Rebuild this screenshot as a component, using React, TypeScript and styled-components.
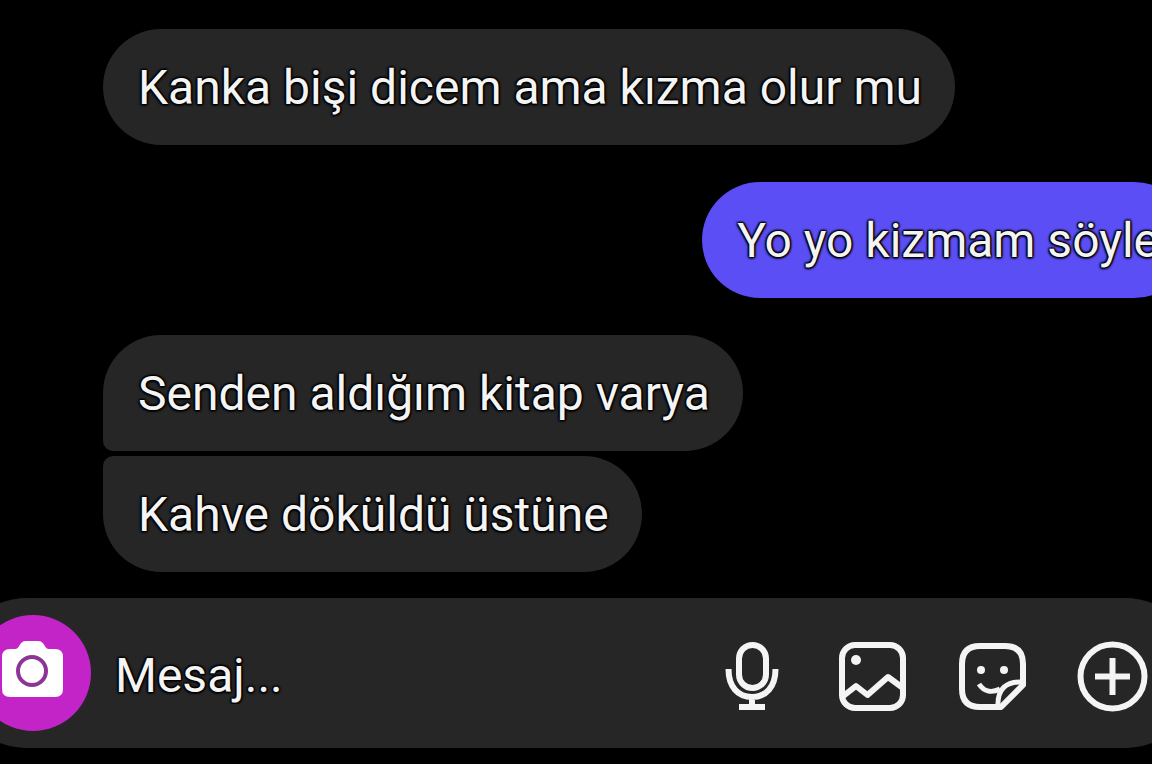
import React from "react";
import styled, { createGlobalStyle } from "styled-components";

const GlobalStyle = createGlobalStyle`
  *, *::before, *::after { box-sizing: border-box; }
  html, body { margin: 0; background: #000; }
`;

const outline =
  "1px 1px 2px #000, -1px 1px 2px #000, 1px -1px 2px #000, -1px -1px 2px #000, 0 1px 3px #000";

const Screen = styled.div`
  display: flex;
  flex-direction: column;
  min-height: 100vh;
  padding: 29px 0 16px;
  overflow: hidden;
  background: #000;
  color: #f4f4f4;
  font-family: Roboto, "Liberation Sans", sans-serif;
  font-size: 48px;
  line-height: 56px;
`;

const Thread = styled.main`
  display: flex;
  flex: 1;
  flex-direction: column;
  gap: 37px;
  margin-bottom: 26px;
`;

const Group = styled.section<{ $own?: boolean }>`
  display: flex;
  flex-direction: column;
  gap: 5px;
  align-items: ${(p) => (p.$own ? "flex-end" : "flex-start")};
  margin-left: 103px;
  margin-right: ${(p) => (p.$own ? "-40px" : "0")};
`;

const Bubble = styled.p<{ $own?: boolean }>`
  margin: 0;
  padding: 31px 33px 29px 35px;
  border-radius: 58px;
  background: ${(p) => (p.$own ? "#5b4ef5" : "#262626")};
  text-shadow: ${outline};
  white-space: nowrap;

  ${Group} > &:not(:last-child) { border-bottom-left-radius: 10px; }
  ${Group} > &:not(:first-child) { border-top-left-radius: 10px; }
`;

const Composer = styled.form`
  display: flex;
  align-items: center;
  height: 150px;
  margin: 0 -48px;
  padding: 0 52px 0 23px;
  border-radius: 75px;
  background: #262626;
`;

const CameraButton = styled.button`
  display: grid;
  flex: none;
  place-items: center;
  width: 116px;
  height: 116px;
  padding: 0;
  border: 0;
  border-radius: 50%;
  background: #c224c8;
`;

const MessageInput = styled.input`
  flex: 1;
  min-width: 0;
  margin: 0 20px 0 16px;
  padding: 6px 0 0 8px;
  border: 0;
  outline: 0;
  background: transparent;
  color: inherit;
  font: inherit;
  text-shadow: ${outline};

  &::placeholder { color: #f4f4f4; opacity: 1; }
`;

const Tools = styled.div`
  display: flex;
  flex: none;
  gap: 48px;
  padding-top: 8px;
`;

const ToolButton = styled.button`
  width: 72px;
  height: 72px;
  padding: 0;
  border: 0;
  background: transparent;
  color: #f4f4f4;
`;

const Icon = styled.svg`
  display: block;
  width: 72px;
  height: 72px;
  fill: none;
  stroke: currentColor;
  stroke-width: 6;
  stroke-linejoin: round;
`;

const CameraIcon = () => (
  <svg width="64" height="64" viewBox="0 0 64 64" aria-hidden="true">
    <path
      fill="#fff"
      d="M9 8H14C19 8 18 0 25 0H37C44 0 43 8 48 8H54Q62 8 62 16V48Q62 56 54 56H9Q1 56 1 48V16Q1 8 9 8Z"
    />
    <circle cx="31" cy="30" r="14" fill="#fff" stroke="#8c3596" strokeWidth="4" />
  </svg>
);

const MicIcon = () => (
  <Icon viewBox="0 0 72 72" aria-hidden="true">
    <rect x="23" y="4" width="27" height="43" rx="13.5" />
    <path d="M12.500 28C12.500 46 22 56 36 56S59.500 46 59.500 28M36 56V65M23 66H49" />
  </Icon>
);

const PhotoIcon = () => (
  <Icon viewBox="0 0 72 72" aria-hidden="true">
    <rect x="6" y="4" width="61" height="63" rx="13" />
    <circle cx="20" cy="19" r="5" fill="currentColor" stroke="none" />
    <path d="M6 56L20 45L31.500 54L52 36L67 47" />
  </Icon>
);

const StickerIcon = () => (
  <Icon viewBox="0 0 72 72" aria-hidden="true">
    <path d="M45 66H24Q6 66 6 48V23Q6 5 24 5H49Q67 5 67 23V44Z" />
    <path d="M67 41C50 40 41 48 42 66" strokeWidth="5" />
    <path d="M23 43C28 51 36 52 44 48" strokeWidth="5" />
    <circle cx="25" cy="29" r="4" fill="currentColor" stroke="none" />
    <circle cx="48" cy="29" r="4" fill="currentColor" stroke="none" />
  </Icon>
);

const PlusIcon = () => (
  <Icon viewBox="0 0 72 72" aria-hidden="true">
    <circle cx="36.5" cy="35.5" r="32" />
    <path d="M19 35.500H54M36.500 17V54" />
  </Icon>
);

const groups = [
  { own: false, messages: ["Kanka bişi dicem ama kızma olur mu"] },
  { own: true, messages: ["Yo yo kizmam söyle"] },
  { own: false, messages: ["Senden aldığım kitap varya", "Kahve döküldü üstüne"] },
];

const tools = [
  { label: "Ses kaydı", Glyph: MicIcon },
  { label: "Fotoğraf", Glyph: PhotoIcon },
  { label: "Çıkartma", Glyph: StickerIcon },
  { label: "Daha fazla", Glyph: PlusIcon },
];

export default function App() {
  return (
    <>
      <GlobalStyle />
      <Screen lang="tr">
        <Thread>
          {groups.map((group, i) => (
            <Group key={i} $own={group.own}>
              {group.messages.map((text) => (
                <Bubble key={text} $own={group.own}>{text}</Bubble>
              ))}
            </Group>
          ))}
        </Thread>
        <Composer onSubmit={(e) => e.preventDefault()}>
          <CameraButton type="button" aria-label="Kamera">
            <CameraIcon />
          </CameraButton>
          <MessageInput type="text" aria-label="Mesaj" placeholder="Mesaj..." />
          <Tools>
            {tools.map(({ label, Glyph }) => (
              <ToolButton key={label} type="button" aria-label={label}>
                <Glyph />
              </ToolButton>
            ))}
          </Tools>
        </Composer>
      </Screen>
    </>
  );
}
